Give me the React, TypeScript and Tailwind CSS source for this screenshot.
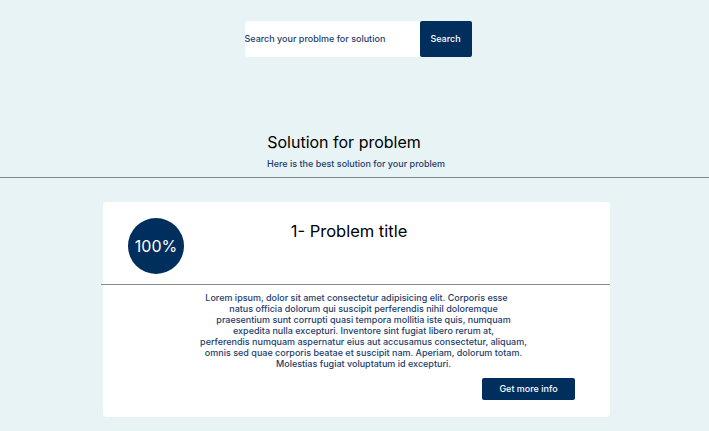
const BODY_LINES = [
  'Lorem ipsum, dolor sit amet consectetur adipisicing elit. Corporis esse',
  'natus officia dolorum qui suscipit perferendis nihil doloremque',
  'praesentium sunt corrupti quasi tempora mollitia iste quis, numquam',
  'expedita nulla excepturi. Inventore sint fugiat libero rerum at,',
  'perferendis numquam aspernatur eius aut accusamus consectetur, aliquam,',
  'omnis sed quae corporis beatae et suscipit nam. Aperiam, dolorum totam.',
  'Molestias fugiat voluptatum id excepturi.',
]

function SearchBar() {
  return (
    <div className="flex justify-center pt-[21px] pl-[7px]">
      <div className="flex h-[36px] w-[227px] rounded-sm bg-white">
        <input
          className="w-[175px] bg-transparent text-[9px] font-medium text-[#1d3d6b] outline-none placeholder:text-[#1d3d6b]"
          placeholder="Search your problme for solution"
        />
        <button className="w-[52px] rounded-[2px] bg-[#012f5d] text-[9px] font-medium text-white">Search</button>
      </div>
    </div>
  )
}

function ProblemCard() {
  return (
    <div className="ml-[103px] w-[507px] rounded-sm bg-white pb-[17px]">
      <div className="relative h-[82px]">
        <div className="absolute left-[25px] top-[16px] flex h-[56px] w-[56px] items-center justify-center rounded-full bg-[#012f5d] text-[16px] text-white">
          100%
        </div>
        <h2 className="pt-[17px] pr-[15px] text-center text-[16.5px] text-black">1- Problem title</h2>
      </div>
      <hr className="-ml-[2px] border-t border-[#8a8a8a]" />
      <p className="mx-auto mt-[7px] w-[340px] translate-x-[7px] text-center text-[9px] font-medium leading-[11px] text-[#1d3d6b]">
        {BODY_LINES.map((line, i) => (
          <span key={i} className={i === 0 ? 'block -translate-x-[7px]' : 'block'}>
            {line}
          </span>
        ))}
      </p>
      <div className="mt-[9px] flex justify-end pr-[35px]">
        <button className="h-[22px] w-[93px] rounded-[2px] bg-[#012f5d] text-[9px] font-medium text-white">
          Get more info
        </button>
      </div>
    </div>
  )
}

export default function App() {
  return (
    <div className="h-[431px] w-[709px] overflow-hidden bg-[#e8f3f5] font-['Inter',sans-serif]">
      <SearchBar />
      <div className="mt-[74px] text-center">
        <h1 className="pr-[21px] text-[16px] leading-[22px] text-black">Solution for problem</h1>
        <p className="mt-[4px] pl-[3px] text-[9px] font-medium text-[#1d3d6b]">Here is the best solution for your problem</p>
      </div>
      <hr className="mt-[6px] border-t border-[#7f8a8c]" />
      <div className="mt-[24px]">
        <ProblemCard />
      </div>
    </div>
  )
}
